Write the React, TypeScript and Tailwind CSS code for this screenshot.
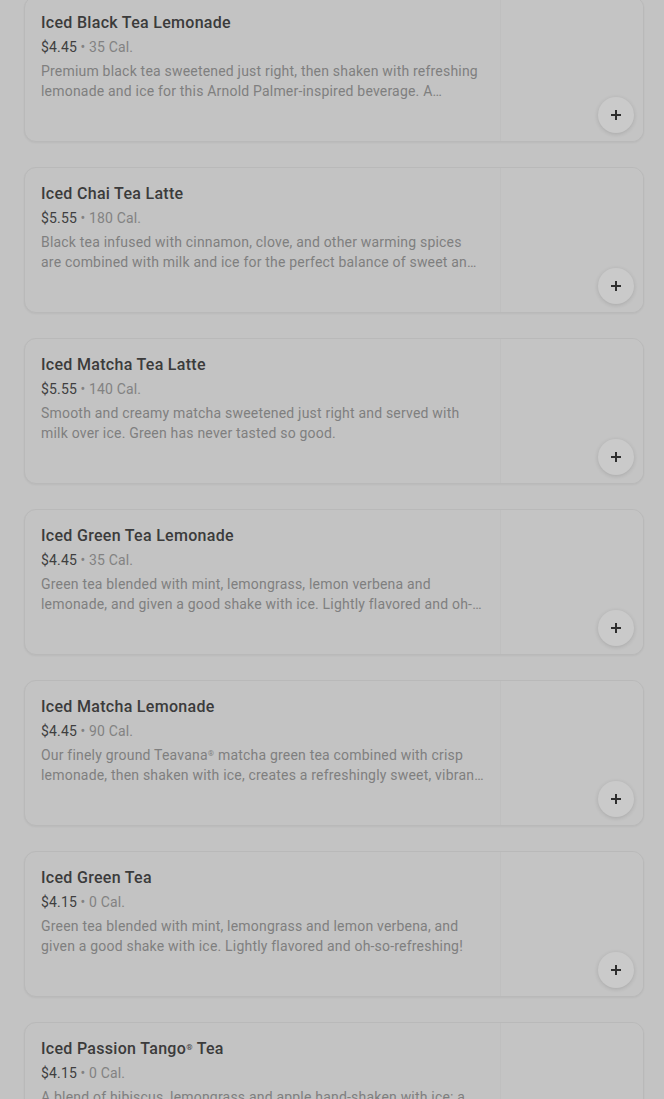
import React from 'react';

interface Item {
  name: string;
  price: string;
  cal: string;
  desc: string;
}

const items: Item[] = [
  {
    name: 'Iced Black Tea Lemonade',
    price: '$4.45',
    cal: '35 Cal.',
    desc: 'Premium black tea sweetened just right, then shaken with refreshing lemonade and ice for this Arnold Palmer-inspired beverage. A delightful balance of citrus and tea.',
  },
  {
    name: 'Iced Chai Tea Latte',
    price: '$5.55',
    cal: '180 Cal.',
    desc: 'Black tea infused with cinnamon, clove, and other warming spices are combined with milk and ice for the perfect balance of sweet and spicy.',
  },
  {
    name: 'Iced Matcha Tea Latte',
    price: '$5.55',
    cal: '140 Cal.',
    desc: 'Smooth and creamy matcha sweetened just right and served with milk over ice. Green has never tasted so good.',
  },
  {
    name: 'Iced Green Tea Lemonade',
    price: '$4.45',
    cal: '35 Cal.',
    desc: 'Green tea blended with mint, lemongrass, lemon verbena and lemonade, and given a good shake with ice. Lightly flavored and oh-so-refreshing!',
  },
  {
    name: 'Iced Matcha Lemonade',
    price: '$4.45',
    cal: '90 Cal.',
    desc: 'Our finely ground Teavana® matcha green tea combined with crisp lemonade, then shaken with ice, creates a refreshingly sweet, vibrant green beverage.',
  },
  {
    name: 'Iced Green Tea',
    price: '$4.15',
    cal: '0 Cal.',
    desc: 'Green tea blended with mint, lemongrass and lemon verbena, and given a good shake with ice. Lightly flavored and oh-so-refreshing!',
  },
  {
    name: 'Iced Passion Tango® Tea',
    price: '$4.15',
    cal: '0 Cal.',
    desc: 'A blend of hibiscus, lemongrass and apple hand-shaken with ice: a refreshingly vibrant tea infused with the color of passion.',
  },
];

// small raised ® like on the menu
const withMarks = (text: string) =>
  text.split('®').map((part, i, arr) => (
    <React.Fragment key={i}>
      {part}
      {i < arr.length - 1 && <span className="relative -top-[4px] text-[8px] leading-none">®</span>}
    </React.Fragment>
  ));

const PlusIcon = () => (
  <svg width="12" height="12" viewBox="0 0 12 12" fill="none">
    <path d="M6 1v10M1 6h10" stroke="#2e2e2e" strokeWidth="2" />
  </svg>
);

const MenuCard: React.FC<{ item: Item }> = ({ item }) => (
  <div className="flex h-[146px] shrink-0 overflow-hidden rounded-xl border border-[#b9b9b9] bg-[#c3c3c3] shadow-[0_1px_2px_rgba(0,0,0,0.05)]">
    <div className="flex-1 pl-4 pr-[16px] pt-[15px]">
      <h3 className="text-[16px] font-medium leading-[22px] tracking-[0.3px] text-[#3b3b3b]">{withMarks(item.name)}</h3>
      <p className="mt-[3px] text-[14px] leading-[20px] tracking-[0.15px]">
        <span className="text-[#3f3f3f]">{item.price}</span>
        <span className="text-[#828282]"> • {item.cal}</span>
      </p>
      <p className="mt-[4px] line-clamp-2 text-[14px] leading-[20px] tracking-[0.2px] text-[#7f7f7f]">{withMarks(item.desc)}</p>
    </div>
    <div className="relative w-[143px] shrink-0 border-l border-[#bfbfbf] bg-[#c4c4c4]">
      <button className="absolute bottom-[8px] right-[9px] flex h-9 w-9 items-center justify-center rounded-full bg-[#cacaca] shadow-[0_1px_4px_rgba(0,0,0,0.14)]">
        <PlusIcon />
      </button>
    </div>
  </div>
);

export default function App() {
  return (
    <div className="h-[1099px] overflow-hidden bg-[#c3c3c3] pl-6 pr-5 font-['Roboto',sans-serif]">
      <div className="-mt-[4px] flex flex-col gap-[25px]">
        {items.map((item) => (
          <MenuCard key={item.name} item={item} />
        ))}
      </div>
    </div>
  );
}
